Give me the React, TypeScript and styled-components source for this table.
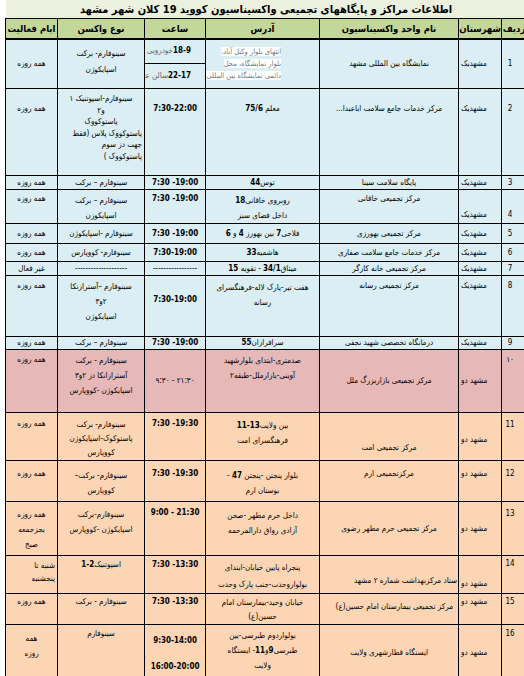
import React from 'react';
import styled, { createGlobalStyle } from 'styled-components';

const C = {
  title: '#ebf1de',
  head: '#c4d79b',
  blue: '#daeef3',
  pink: '#e6b8b7',
  peach: '#fcd5b4',
};

const GlobalStyle = createGlobalStyle`
  html, body { margin: 0; padding: 0; background: #fff; }
  body {
    width: 524px;
    height: 676px;
    overflow: hidden;
    font-family: "DejaVu Sans Condensed", "DejaVu Sans", sans-serif;
    color: #000;
  }
`;

const Page = styled.div`
  padding-left: 5px;
  width: 524px;
  box-sizing: border-box;
`;

const Sheet = styled.table`
  direction: rtl;
  border-collapse: collapse;
  table-layout: fixed;
  width: 521px;
  font-size: 8px;
`;

const Row = styled.tr<{ $bg: string; $h: number }>`
  background: ${(p) => p.$bg};
  height: ${(p) => p.$h}px;
`;

const TitleCell = styled.td`
  background: ${C.title};
  text-align: center;
  font-weight: bold;
  font-size: 11px;
  height: 18px;
  padding: 0;
  border-bottom: 1px solid #000;
`;

const Head = styled.th`
  background: ${C.head};
  border: 1px solid #000;
  border-bottom: 2px solid #000;
  font-size: 9.5px;
  font-weight: bold;
  padding: 0;
  white-space: nowrap;
  overflow: hidden;
`;

type Align = 'left' | 'right' | 'center';
type VAlign = 'top' | 'middle' | 'bottom';

const Cell = styled.td<{ $align?: Align; $v?: VAlign; $pt?: number; $pb?: number; $pr?: number; $lh?: number }>`
  border: 1px solid #000;
  padding: ${(p) => p.$pt ?? 0}px ${(p) => p.$pr ?? 2}px ${(p) => p.$pb ?? 0}px 2px;
  text-align: ${(p) => p.$align ?? 'center'};
  vertical-align: ${(p) => p.$v ?? 'middle'};
  line-height: ${(p) => p.$lh ?? 12}px;
  white-space: nowrap;
  overflow: hidden;
`;

/* the row-number column: numbers sit a little left of the column centre */
const NumCell = styled(Cell)`
  padding-right: 10px;
`;

const Line = styled.div<{ $align?: Align }>`
  text-align: ${(p) => p.$align ?? 'inherit'};
`;

const Num = styled.b`
  font-weight: bold;
`;

const Time = styled.span<{ $light?: boolean }>`
  direction: ltr;
  unicode-bidi: isolate;
  font-weight: ${(p) => (p.$light ? 'normal' : 'bold')};
`;

const Note = styled.span`
  color: #7a7a7a;
  background: #fff;
  font-size: 7.5px;
`;

const Soft = styled.span`
  color: #666;
`;

const fmt = (s: string) =>
  s.split(/([0-9][0-9:/\-]*[0-9]|[0-9])/).map((part, i) =>
    /[0-9]/.test(part) ? <Num key={i}>{part}</Num> : <React.Fragment key={i}>{part}</React.Fragment>
  );

export default function App() {
  return (
    <Page>
      <GlobalStyle />
      <Sheet>
        <colgroup>
          <col style={{ width: 25 }} />
          <col style={{ width: 43 }} />
          <col style={{ width: 139 }} />
          <col style={{ width: 114 }} />
          <col style={{ width: 61 }} />
          <col style={{ width: 87 }} />
          <col style={{ width: 52 }} />
        </colgroup>
        <tbody>
          <tr>
            <TitleCell colSpan={7}>اطلاعات مراکز و پایگاههای تجمیعی واکسیناسیون کووید 19 کلان شهر مشهد</TitleCell>
          </tr>
          <Row $bg={C.head} $h={20}>
            <Head>ردیف</Head>
            <Head>شهرستان</Head>
            <Head>نام واحد واکسیناسیون</Head>
            <Head>آدرس</Head>
            <Head>ساعت</Head>
            <Head>نوع واکسن</Head>
            <Head>ایام فعالیت</Head>
          </Row>

          {/* 1 */}
          <Row $bg={C.blue} $h={25}>
            <NumCell rowSpan={2}>1</NumCell>
            <Cell rowSpan={2} $align="left">مشهدیک</Cell>
            <Cell rowSpan={2}>نمایشگاه بین المللی مشهد</Cell>
            <Cell rowSpan={2} $align="right" $pr={38} $lh={12}>
              <Line><Note>انتهای بلوار وکیل آباد،</Note></Line>
              <Line><Note>بلوار نمایشگاه، محل</Note></Line>
              <Line><Note>دائمی نمایشگاه بین المللی مشهد</Note></Line>
            </Cell>
            <Cell $align="right" $pr={14}><Num>18-9</Num><Soft>خودرویی</Soft></Cell>
            <Cell rowSpan={2} $v="top" $pt={6} $lh={16}>
              <Line>سینوفارم- برکت</Line>
              <Line>اسپایکوژن</Line>
            </Cell>
            <Cell rowSpan={2}>همه روزه</Cell>
          </Row>
          <Row $bg={C.blue} $h={25}>
            <Cell $align="right" $pr={14}><Num>22-17</Num><Soft>سالن عطار</Soft></Cell>
          </Row>

          {/* 2 */}
          <Row $bg={C.blue} $h={87}>
            <NumCell $v="top" $pt={14}>2</NumCell>
            <Cell $v="top" $pt={14} $align="left">مشهدیک</Cell>
            <Cell $v="top" $pt={14}>مرکز خدمات جامع سلامت اباعبدا...</Cell>
            <Cell $v="top" $pt={14}>{fmt('معلم 75/6')}</Cell>
            <Cell $v="top" $pt={14}><Time>7:30-22:00</Time></Cell>
            <Cell $v="top" $pt={4} $lh={11.5}>
              <Line>سینوفارم-اسپوتنیک ۱</Line>
              <Line>و۲</Line>
              <Line>پاستوکووک</Line>
              <Line $align="right">پاستوکووک پلاس (فقط</Line>
              <Line $align="right">جهت دز سوم</Line>
              <Line $align="right">پاستوکووک )</Line>
            </Cell>
            <Cell $v="top" $pt={14}>همه روزه</Cell>
          </Row>

          {/* 3 */}
          <Row $bg={C.blue} $h={14}>
            <NumCell>3</NumCell>
            <Cell $align="left">مشهدیک</Cell>
            <Cell>پایگاه سلامت سینا</Cell>
            <Cell>{fmt('توس44')}</Cell>
            <Cell><Time>7:30 -19:00</Time></Cell>
            <Cell>سینوفارم – برکت</Cell>
            <Cell>همه روزه</Cell>
          </Row>

          {/* 4 */}
          <Row $bg={C.blue} $h={34}>
            <NumCell $v="bottom" $pb={2}>4</NumCell>
            <Cell $v="bottom" $pb={2} $align="left">مشهدیک</Cell>
            <Cell $v="top" $pt={3}>مرکز تجمیعی خاقانی</Cell>
            <Cell $v="top" $pt={3} $lh={15}>
              <Line>{fmt('روبروی خاقانی18')}</Line>
              <Line>داخل فضای سبز</Line>
            </Cell>
            <Cell $v="top" $pt={3}><Time>7:30 -19:00</Time></Cell>
            <Cell $v="top" $pt={3} $lh={15}>
              <Line>سینوفارم – برکت</Line>
              <Line>اسپایکوزن</Line>
            </Cell>
            <Cell $v="top" $pt={3}>همه روزه</Cell>
          </Row>

          {/* 5 */}
          <Row $bg={C.blue} $h={20}>
            <NumCell>5</NumCell>
            <Cell $align="left">مشهدیک</Cell>
            <Cell>مرکز تجمیعی بهورزی</Cell>
            <Cell>{fmt('فلاحی7 بین بهورز 4 و 6')}</Cell>
            <Cell><Time>7:30 -19:00</Time></Cell>
            <Cell>سینوفارم -اسپایکوژن</Cell>
            <Cell>همه روزه</Cell>
          </Row>

          {/* 6 */}
          <Row $bg={C.blue} $h={18}>
            <NumCell>6</NumCell>
            <Cell $align="left">مشهدیک</Cell>
            <Cell>مرکز خدمات جامع سلامت صفاری</Cell>
            <Cell>{fmt('هاشمیه33')}</Cell>
            <Cell><Time>7:30-19:00</Time></Cell>
            <Cell>سینوفارم- کووپارس</Cell>
            <Cell>همه روزه</Cell>
          </Row>

          {/* 7 */}
          <Row $bg={C.blue} $h={14}>
            <NumCell>7</NumCell>
            <Cell $align="left">مشهدیک</Cell>
            <Cell>مرکز تجمیعی خانه کارگر</Cell>
            <Cell>{fmt('میثاق34/1 - تقویه 15')}</Cell>
            <Cell>-----------------</Cell>
            <Cell>--------------------</Cell>
            <Cell>غیر فعال</Cell>
          </Row>

          {/* 8 */}
          <Row $bg={C.blue} $h={61}>
            <NumCell $v="top" $pt={4}>8</NumCell>
            <Cell $v="top" $pt={4} $align="left">مشهدیک</Cell>
            <Cell $v="top" $pt={4}>مرکز تجمیعی رسانه</Cell>
            <Cell $v="top" $pt={4} $lh={15}>
              <Line>هفت تیر-پارک لاله-فرهنگسرای</Line>
              <Line>رسانه</Line>
            </Cell>
            <Cell $v="top" $pt={18}><Time>7:30-19:00</Time></Cell>
            <Cell $v="top" $pt={3} $lh={15}>
              <Line>سینوفارم –آسترازنکا</Line>
              <Line>۲و۳</Line>
              <Line>اسپایکوژن</Line>
            </Cell>
            <Cell $v="top" $pt={4}>همه روزه</Cell>
          </Row>

          {/* 9 */}
          <Row $bg={C.blue} $h={13}>
            <NumCell>9</NumCell>
            <Cell $align="left">مشهدیک</Cell>
            <Cell>درمانگاه تخصصی شهید نجفی</Cell>
            <Cell>{fmt('سرافرازان55')}</Cell>
            <Cell><Time>7:30 -19:00</Time></Cell>
            <Cell>سینوفارم – برکت</Cell>
            <Cell>همه روزه</Cell>
          </Row>

          {/* 10 */}
          <Row $bg={C.pink} $h={63}>
            <NumCell $v="top" $pt={4}>۱۰</NumCell>
            <Cell $align="left">مشهد دو</Cell>
            <Cell>مرکز تجمیعی بازاربزرگ ملل</Cell>
            <Cell $v="top" $pt={3} $lh={15}>
              <Line>صدمتری-ابتدای بلوارشهید</Line>
              <Line>آوینی-بازارملل-طبقه۲</Line>
            </Cell>
            <Cell><Time $light>۹:۳۰ - ۲۱:۳۰</Time></Cell>
            <Cell $v="top" $pt={3} $lh={15}>
              <Line>سینوفارم - برکت</Line>
              <Line>آسترازانکا دز ۲و۳</Line>
              <Line>اسپایکوژن -کووپارس</Line>
            </Cell>
            <Cell $v="top" $pt={4}>همه روزه</Cell>
          </Row>

          {/* 11 */}
          <Row $bg={C.peach} $h={48}>
            <NumCell $v="top" $pt={6}>11</NumCell>
            <Cell $align="left" $pt={6}>مشهد دو</Cell>
            <Cell $v="bottom" $pb={6}>مرکز تجمیعی امت</Cell>
            <Cell $v="top" $pt={5} $lh={15}>
              <Line>{fmt('بین ولایت13-11')}</Line>
              <Line>فرهنگسرای امت</Line>
            </Cell>
            <Cell $v="top" $pt={5}><Time>7:30 -19:30</Time></Cell>
            <Cell $v="top" $pt={5} $lh={14}>
              <Line>سینوفارم- برکت</Line>
              <Line>پاستوکوک-اسپایکوژن</Line>
              <Line>کووپارس</Line>
            </Cell>
            <Cell $v="top" $pt={5}>همه روزه</Cell>
          </Row>

          {/* 12 */}
          <Row $bg={C.peach} $h={41}>
            <NumCell $v="top" $pt={7}>12</NumCell>
            <Cell $v="top" $pt={7} $align="left">مشهد دو</Cell>
            <Cell $v="top" $pt={7}>مرکزتجمیعی ارم</Cell>
            <Cell $v="top" $pt={7} $lh={15}>
              <Line>{fmt('بلوار پنجتن -پنجتن 47 -')}</Line>
              <Line>بوستان ارم</Line>
            </Cell>
            <Cell $v="top" $pt={7}><Time>7:30 -19:30</Time></Cell>
            <Cell $v="top" $pt={7} $lh={15}>
              <Line>سینوفارم- برکت–</Line>
              <Line>کووپارس</Line>
            </Cell>
            <Cell $v="top" $pt={7}>همه روزه</Cell>
          </Row>

          {/* 13 */}
          <Row $bg={C.peach} $h={54}>
            <NumCell $v="top" $pt={6}>13</NumCell>
            <Cell $align="left">مشهد دو</Cell>
            <Cell>مرکز تجمیعی حرم مطهر رضوی</Cell>
            <Cell $v="top" $pt={6} $lh={15}>
              <Line>داخل حرم مطهر -صحن</Line>
              <Line>آزادی رواق دارالمرحمه</Line>
            </Cell>
            <Cell $v="top" $pt={5}><Time>9:00 - 21:30</Time></Cell>
            <Cell $v="top" $pt={5} $lh={15}>
              <Line>سینوفارم-برکت</Line>
              <Line>اسپایکوژن -کووپارس</Line>
            </Cell>
            <Cell $v="top" $pt={5} $lh={15}>
              <Line>همه روزه</Line>
              <Line>بجزجمعه</Line>
              <Line>صبح</Line>
            </Cell>
          </Row>

          {/* 14 */}
          <Row $bg={C.peach} $h={38}>
            <NumCell $v="top" $pt={2}>14</NumCell>
            <Cell $v="bottom" $pb={3} $align="left">مشهد دو</Cell>
            <Cell $v="bottom" $pb={6} $align="right" $pr={1}>ستاد مرکزبهداشت شماره ۲ مشهد</Cell>
            <Cell $v="top" $pt={3} $lh={17}>
              <Line>پنجراه پایین خیابان-ابتدای</Line>
              <Line>بولواروحدت-جنب پارک وحدت</Line>
            </Cell>
            <Cell $v="top" $pt={3}><Time>7:30 -13:30</Time></Cell>
            <Cell $v="top" $pt={3}>{fmt('اسپوتنیک2-1')}</Cell>
            <Cell $v="top" $pt={3} $align="right" $lh={13}>
              <Line>شنبه تا</Line>
              <Line>پنجشنبه</Line>
            </Cell>
          </Row>

          {/* 15 */}
          <Row $bg={C.peach} $h={26}>
            <NumCell $v="top" $pt={2}>15</NumCell>
            <Cell $v="top" $pt={2} $align="left">مشهد دو</Cell>
            <Cell $v="top" $pt={7} $align="right" $pr={5}>مرکز  تجمیعی بیمارستان امام حسین(ع)</Cell>
            <Cell $v="top" $pt={2} $lh={14}>
              <Line>خیابان وحید-بیمارستان امام</Line>
              <Line>حسین(ع)</Line>
            </Cell>
            <Cell $v="top" $pt={2}><Time>7:30 -13:30</Time></Cell>
            <Cell $v="top" $pt={2}>سینوفارم - برکت</Cell>
            <Cell $v="top" $pt={2}>همه روزه</Cell>
          </Row>

          {/* 16 */}
          <Row $bg={C.peach} $h={51}>
            <NumCell $v="top" $pt={3}>16</NumCell>
            <Cell $align="left">مشهد دو</Cell>
            <Cell>ایستگاه قطارشهری ولایت</Cell>
            <Cell $v="top" $pt={3} $lh={15}>
              <Line>بولواردوم طبرسی-بین</Line>
              <Line>{fmt('طبرسی9و11- ایستگاه')}</Line>
              <Line>ولایت</Line>
            </Cell>
            <Cell $v="top" $pt={3} $lh={26}>
              <Line><Time>9:30-14:00</Time></Line>
              <Line><Time>16:00-20:00</Time></Line>
            </Cell>
            <Cell $v="top" $pt={3}>سینوفارم</Cell>
            <Cell $v="top" $pt={6} $lh={15}>
              <Line>همه</Line>
              <Line>روزه</Line>
            </Cell>
          </Row>
        </tbody>
      </Sheet>
    </Page>
  );
}
